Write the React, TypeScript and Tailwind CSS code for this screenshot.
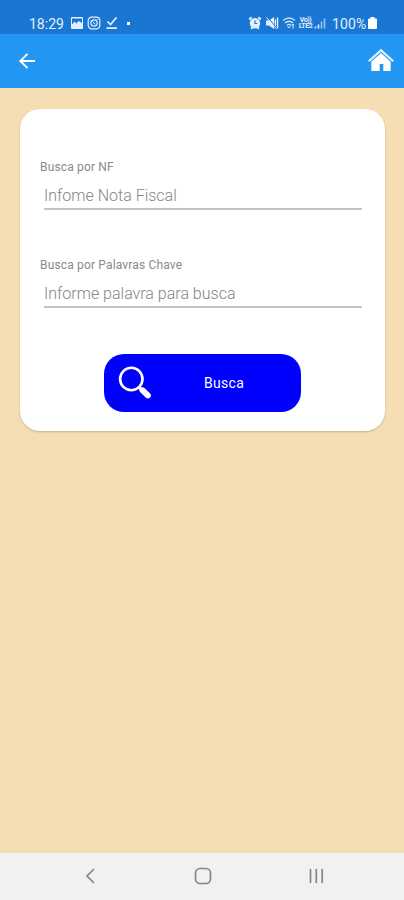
import type { ReactNode } from 'react';

interface FieldProps {
  label: string;
  placeholder: string;
  className?: string;
}

function Field({ label, placeholder, className = '' }: FieldProps) {
  return (
    <label className={`block ${className}`}>
      <span className="block h-4 text-[12px] leading-4 tracking-[0.16px] text-[#8a8a8a]">{label}</span>
      <input
        type="text"
        placeholder={placeholder}
        className="block ml-1 mt-[8px] h-[27px] w-[318px] border-b-2 border-[#c4c4c4] bg-transparent pb-px text-[16px] font-light text-gray-700 outline-none placeholder:text-[#858585]"
      />
    </label>
  );
}

function Glyph({ className = '', children }: { className?: string; children: ReactNode }) {
  return (
    <svg viewBox="0 0 14 14" className={`h-[14px] w-[14px] shrink-0 ${className}`} fill="none" stroke="currentColor">
      {children}
    </svg>
  );
}

function StatusBar() {
  return (
    <div className="flex h-[34px] items-start bg-[#1976d2] pl-[29px] pr-[27px] pt-4 text-[#e3f1ff]">
      <span className="w-[35px] whitespace-nowrap text-[14px] leading-4">18:29</span>

      {/* Notifications */}
      <Glyph className="ml-[6px]">
        <path d="M2 1h10a1 1 0 0 1 1 1v10a1 1 0 0 1-1 1H2a1 1 0 0 1-1-1V2a1 1 0 0 1 1-1Zm0 7.5 2.5-3 2 2 2-2.5 3.5 2V2.5H2Z" fill="currentColor" fillRule="evenodd" stroke="none" />
      </Glyph>
      <Glyph className="ml-[3px]">
        <rect x="1.2" y="1.2" width="11.6" height="11.6" rx="3.5" strokeWidth="1.2" />
        <circle cx="7" cy="7" r="3.2" strokeWidth="1.2" />
        <path d="m5.5 5.5 3 3M9.8 3.5h1" strokeWidth="1" />
      </Glyph>
      <Glyph className="ml-[4px]">
        <path d="m2.5 5.5 3 3 6-7M1.5 12.2h10.5" strokeWidth="1.7" />
      </Glyph>
      <span className="ml-[8px] mt-[6px] h-[3px] w-[3px] bg-white" />

      {/* System state */}
      <div className="ml-auto flex">
        <Glyph>
          <circle cx="7" cy="7.2" r="5.2" fill="currentColor" stroke="none" />
          <path d="m1.2 3.5 2.5-2.3M12.8 3.5l-2.5-2.3M3 12.8l1.5-1.5M11 12.8l-1.5-1.5" strokeWidth="2" />
          <path d="M7 4.5v3h2.3" stroke="#1976d2" strokeWidth="1.2" />
        </Glyph>
        <Glyph className="ml-[3px]">
          <path d="M1 4.5h3l5-3.5v12L4 9.5H1Z" fill="currentColor" stroke="none" />
          <path d="M10.3 3.5v7M12.5 1.5v11" strokeWidth="1.4" />
          <path d="m3 1.5 9 11" stroke="#1976d2" strokeWidth="1" />
          <path d="m1.5 1.5 10 11.5" strokeWidth="1" />
        </Glyph>
        <Glyph className="ml-[3px] opacity-90">
          <path d="M1 4.5q6-5 12 0M3 7q4-3.5 8 0M5 9.2q2-1.6 4 0" strokeWidth="1.4" />
          <path d="m5.5 10 1.5 2 1.5-2M11 8v5m-1.4-3.4L11 8l1.4 1.6" strokeWidth="1" />
        </Glyph>
        <span className="ml-px mt-px w-[17px] whitespace-pre text-center text-[7px] font-bold leading-[6px] tracking-[-0.4px]">
          {'Vo))\nLTE2'}
        </span>
        <Glyph>
          <path d="M1.5 12.5v-2M4.5 12.5v-4" strokeWidth="1.6" />
          <path d="M7.5 12.5v-7M10.5 12.5v-10" strokeWidth="1.6" opacity=".65" />
        </Glyph>
        <span className="ml-[4px] w-[36px] whitespace-nowrap text-[14px] leading-4 tracking-[0.15px]">100%</span>
        <svg viewBox="0 0 9 14" className="h-[14px] w-[9px] shrink-0" fill="white">
          <path d="M2.5 1h4v1.5H8q1 0 1 1V12q0 1-1 1H1q-1 0-1-1V3.5q0-1 1-1h1.5Z" />
        </svg>
      </div>
    </div>
  );
}

function AppBar() {
  return (
    <header className="flex h-[54px] items-center justify-between bg-[#2196f3] pl-[18px] pr-[9px] text-white">
      <button aria-label="Voltar">
        <svg viewBox="0 0 18 18" className="h-[18px] w-[18px]" fill="none" stroke="currentColor" strokeWidth="1.9">
          <path d="M17 9H2.5M9.5 1.8 2.3 9l7.2 7.2" />
        </svg>
      </button>
      <button aria-label="Início" className="pb-[2px]">
        <svg viewBox="0 0 28 24" className="h-6 w-7" fill="white">
          <path d="M14 .8 27 12.4l-1.5 1.5L14 3.8 2.5 13.9 1 12.4Z" opacity=".85" />
          <path d="M4.3 13.7 14 5.1l9.7 8.6V23h-7.4v-7h-3.6v7H4.3Z" />
        </svg>
      </button>
    </header>
  );
}

function NavBar() {
  return (
    <nav className="flex h-[47px] items-center justify-between bg-[#f1f1f1] pb-px pl-[84px] pr-[79px] text-[#858585]">
      <svg viewBox="0 0 12 18" className="h-[18px] w-3" fill="none" stroke="currentColor" strokeWidth="1.7">
        <path d="M10 2 3 9l7 7" />
      </svg>
      <svg viewBox="0 0 18 18" className="ml-[2px] h-[18px] w-[18px]" fill="none" stroke="currentColor" strokeWidth="1.7">
        <rect x="1.5" y="1.5" width="15" height="15" rx="4.5" />
      </svg>
      <svg viewBox="0 0 18 18" className="h-[18px] w-[18px]" fill="none" stroke="currentColor" strokeWidth="1.7">
        <path d="M3.5 2v14M9.3 2v14M15.2 2v14" />
      </svg>
    </nav>
  );
}

export default function App() {
  return (
    <div className="flex h-[900px] w-[404px] flex-col overflow-hidden bg-[#f5deb3] font-['Roboto',sans-serif]">
      <StatusBar />
      <AppBar />

      <main className="flex-1 pl-5 pt-[21px]">
        <section className="h-[322px] w-[365px] rounded-[20px] bg-white px-5 pt-[50px] shadow-[0_1px_2px_rgba(0,0,0,0.2)]">
          <Field label="Busca por NF" placeholder="Infome Nota Fiscal" />
          <Field label="Busca por Palavras Chave" placeholder="Informe palavra para busca" className="mt-[47px]" />

          <button className="ml-16 mt-[46px] flex h-[58px] w-[197px] items-center rounded-[20px] bg-[#0000ff] text-white">
            <svg viewBox="0 0 34 34" className="ml-[14px] h-[34px] w-[34px]" fill="none" stroke="currentColor">
              <circle cx="13.3" cy="13" r="11.2" strokeWidth="2.6" />
              <path d="m20.8 21 3.4 3.4" strokeWidth="3.2" />
              <path d="m24.6 24.4 5.2 5" strokeWidth="6" strokeLinecap="round" />
            </svg>
            <span className="ml-[52px] text-[14px] tracking-[0.3px]">Busca</span>
          </button>
        </section>
      </main>

      <NavBar />
    </div>
  );
}
